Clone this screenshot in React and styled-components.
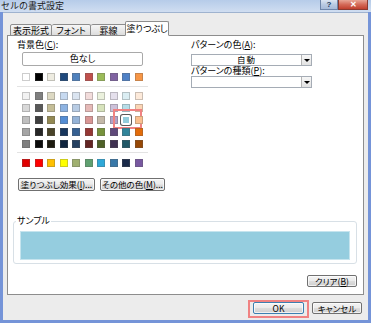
import React from "react";
import styled, { createGlobalStyle } from "styled-components";

const GlobalStyle = createGlobalStyle`
  html, body { margin: 0; padding: 0; background: #ffffff; }
  body {
    font-family: "Noto Sans CJK JP", "Liberation Sans", sans-serif;
    font-size: 9px;
    font-feature-settings: "palt";
    color: #000;
  }
`;

const Window = styled.div`
  width: 371px;
  height: 323px;
  display: flex;
  flex-direction: column;
  background: #7594d8; // frame blue
  overflow: hidden;
`;

const TitleBar = styled.div`
  height: 12px;
  display: flex;
  align-items: flex-start;
  padding-right: 3px;
  background: linear-gradient(180deg, #b6cce9 0%, #d0def1 100%);
`;

const Title = styled.div`
  line-height: 11px;
  padding-left: 1px;
  color: #1b1b1b;
  font-feature-settings: normal;
`;

const CapButton = styled.div`
  width: ${(p) => p.w}px;
  height: 10px;
  box-sizing: border-box;
  display: flex;
  align-items: center;
  justify-content: center;
  border: 1px solid ${(p) => (p.red ? "#8a3a30" : "#6f86aa")};
  border-top: none;
  background: ${(p) =>
    p.red
      ? "linear-gradient(180deg, #e8a696 0%, #d46a58 50%, #c0402e 100%)"
      : "linear-gradient(180deg, #dbe5f2 0%, #b9cae2 50%, #a6bad8 100%)"};
  color: ${(p) => (p.red ? "#ffffff" : "#243a5c")};
  font-family: "Liberation Sans", sans-serif;
  font-weight: bold;
  font-size: 8px;
  line-height: 1;
`;

const CapGroup = styled.div`
  margin-left: auto;
  display: flex;
`;

const Client = styled.div`
  flex: 1;
  margin: 0 3px 3px 3px;
  border-top: 1px solid #9fb3cf;
  background: #ececec;
  display: flex;
  flex-direction: column;
  padding: 8px 4px 0 4px;
`;

const TabStrip = styled.div`
  display: flex;
  align-items: flex-end;
  height: 15px;
  margin-left: 3px;
  margin-bottom: -1px;
  position: relative;
  z-index: 1;
`;

const Tab = styled.div`
  width: ${(p) => p.w}px;
  height: ${(p) => (p.active ? 15 : 12)}px;
  box-sizing: border-box;
  margin: ${(p) => (p.active ? "0 -2px" : "0")};
  border: 1px solid #8d8d8d;
  border-bottom: ${(p) => (p.active ? "1px solid #ffffff" : "1px solid #8d8d8d")};
  border-left: ${(p) => (p.first || p.active ? "1px solid #8d8d8d" : "none")};
  border-radius: 2px 2px 0 0;
  background: ${(p) =>
    p.active ? "#ffffff" : "linear-gradient(180deg, #f6f6f6 0%, #eaeaea 50%, #dcdcdc 100%)"};
  display: flex;
  align-items: center;
  justify-content: center;
  line-height: 10px;
  white-space: nowrap;
  padding-top: ${(p) => (p.active ? 0 : 1)}px;
`;

const Panel = styled.div`
  height: 260px;
  box-sizing: border-box;
  border: 1px solid #8d8d8d;
  background: #ffffff;
  display: flex;
  flex-direction: column;
  padding-top: 4px;
`;

const Top = styled.div`
  display: flex;
`;

const LeftCol = styled.div`
  width: 175px;
  padding-left: 9px;
  box-sizing: border-box;
  display: flex;
  flex-direction: column;
`;

const RightCol = styled.div`
  display: flex;
  flex-direction: column;
  margin-left: 8px;
`;

const Label = styled.div`
  line-height: 10px;
  height: 10px;
  white-space: nowrap;
`;

const NoColor = styled.div`
  margin: 2px 0 0 5px;
  width: 121px;
  height: 14px;
  box-sizing: border-box;
  border: 1px solid #a9a9a9;
  border-radius: 2px;
  background: #ffffff;
  display: flex;
  align-items: center;
  justify-content: center;
  line-height: 10px;
`;

const SwatchGrid = styled.div`
  margin: ${(p) => p.mt}px 0 0 5px;
  display: grid;
  grid-template-columns: repeat(10, 8px);
  column-gap: 4.55px;
  row-gap: 4px;
`;

const Swatch = styled.div`
  width: 8px;
  height: 8px;
  box-sizing: border-box;
  border: 1px solid rgba(90, 90, 90, 0.3);
  background: ${(p) => p.c};
  position: relative;
  ${(p) =>
    p.selected &&
    `
    border: 1px solid #ffffff;
    box-shadow: 0 0 0 1px #ffffff, 0 0 0 2px #5a5a5a;
    border-radius: 1px;
  `}
`;

const Marker = styled.div`
  position: absolute;
  left: -10px;
  top: -8px;
  width: 29px;
  height: 20px;
  box-sizing: border-box;
  border: 2px solid #f08282;
`;

const Separator = styled.div`
  margin: ${(p) => p.mt}px 0 0 0;
  width: 131px;
  height: 1px;
  background: #e3e3e3;
`;

const ButtonRow = styled.div`
  display: flex;
  gap: 5px;
  margin: 11px 0 0 1px;
`;

const Button = styled.div`
  width: ${(p) => p.w}px;
  height: ${(p) => p.h || 13}px;
  box-sizing: border-box;
  border: 1px solid ${(p) => (p.primary ? "#3c7fb1" : "#707070")};
  border-radius: 2px;
  background: linear-gradient(180deg, #f3f3f3 0%, #ebebeb 48%, #dddddd 52%, #cfcfcf 100%);
  box-shadow: inset 0 0 0 1px rgba(255, 255, 255, 0.7);
  display: flex;
  align-items: center;
  justify-content: center;
  line-height: 9px;
  white-space: nowrap;
  font-size: 8.5px;
`;

const Select = styled.div`
  margin-top: ${(p) => p.mt}px;
  width: 121px;
  height: 12px;
  box-sizing: border-box;
  border: 1px solid #a5acb5;
  background: #ffffff;
  display: flex;
`;

const SelectText = styled.div`
  flex: 1;
  display: flex;
  align-items: center;
  justify-content: center;
  font-size: 8.5px;
  line-height: 9px;
  height: 9px;
  letter-spacing: 1px;
`;

const SelectArrow = styled.div`
  width: 10px;
  box-sizing: border-box;
  border-left: 1px solid #b4b4b4;
  background: linear-gradient(180deg, #f7f7f7 0%, #e2e2e2 100%);
  display: flex;
  align-items: center;
  justify-content: center;

  &::after {
    content: "";
    border-left: 3px solid transparent;
    border-right: 3px solid transparent;
    border-top: 3px solid #000000;
  }
`;

const SampleBox = styled.div`
  position: relative;
  margin: 30px 6px 0 5px;
  height: 43px;
  box-sizing: border-box;
  border: 1px solid #d8e0e6;
  border-radius: 3px;
  padding: 9px 6px 0 6px;
`;

const SampleLabel = styled.div`
  position: absolute;
  left: 2px;
  top: -6px;
  padding: 0 1px;
  background: #ffffff;
  line-height: 10px;
`;

const SampleFill = styled.div`
  height: 29px;
  box-sizing: border-box;
  border: 1px solid #c6e4ee;
  background: #95cddf;
`;

const ClearRow = styled.div`
  display: flex;
  justify-content: flex-end;
  margin: 11px 6px 0 0;
`;

const Footer = styled.div`
  display: flex;
  justify-content: flex-end;
  gap: 8px;
  padding: 7px 2px 0 0;
`;

const Annotated = styled.div`
  position: relative;
`;

const OkMarker = styled.div`
  position: absolute;
  left: -5px;
  top: -2px;
  width: 61px;
  height: 18px;
  box-sizing: border-box;
  border: 2px solid #f08282;
`;

const themeRow = ["#ffffff", "#000000", "#eeece1", "#1f497d", "#4f81bd", "#c0504d", "#9bbb59", "#8064a2", "#4f81c6", "#f79646"];

const tints = [
  ["#f2f2f2", "#7f7f7f", "#ddd9c3", "#c6d9f0", "#dbe5f1", "#f2dcdb", "#ebf1dd", "#e5e0ec", "#dbeef3", "#fdeada"],
  ["#d8d8d8", "#595959", "#c4bd97", "#8db3e2", "#b8cce4", "#e5b9b7", "#d7e3bc", "#ccc1d9", "#b7dde8", "#fbd5b5"],
  ["#bfbfbf", "#3f3f3f", "#938953", "#548dd4", "#95b3d7", "#d99694", "#c3b8a8", "#b2a2c7", "#92cddc", "#fac08f"],
  ["#a5a5a5", "#262626", "#494429", "#17365d", "#366092", "#953734", "#76923c", "#5f497a", "#31859b", "#e36c09"],
  ["#7f7f7f", "#0c0c0c", "#1d1b10", "#0f243e", "#244061", "#632423", "#4f6128", "#3f3151", "#205867", "#974806"],
];

const standard = ["#e00000", "#ff0000", "#ffc000", "#ffff00", "#a0b070", "#5fa070", "#2fa8d8", "#3878a8", "#1a2a4a", "#7858a0"];

const App = () => {
  return (
    <>
      <GlobalStyle />
      <Window>
        <TitleBar>
          <Title>セルの書式設定</Title>
          <CapGroup>
            <CapButton w={18}>?</CapButton>
            <CapButton w={30} red>
              ✕
            </CapButton>
          </CapGroup>
        </TitleBar>
        <Client>
          <TabStrip>
            <Tab w={42} first>表示形式</Tab>
            <Tab w={39}>フォント</Tab>
            <Tab w={36}>罫線</Tab>
            <Tab w={44} active>塗りつぶし</Tab>
          </TabStrip>
          <Panel>
            <Top>
              <LeftCol>
                <Label>背景色(<u>C</u>):</Label>
                <NoColor>色なし</NoColor>
                <SwatchGrid mt={7}>
                  {themeRow.map((c, i) => (
                    <Swatch key={i} c={c} />
                  ))}
                </SwatchGrid>
                <Separator mt={5} />
                <SwatchGrid mt={5}>
                  {tints.map((row, r) =>
                    row.map((c, i) =>
                      r === 2 && i === 8 ? (
                        <Swatch key={`${r}-${i}`} c={c} selected>
                          <Marker />
                        </Swatch>
                      ) : (
                        <Swatch key={`${r}-${i}`} c={c} />
                      )
                    )
                  )}
                </SwatchGrid>
                <Separator mt={4} />
                <SwatchGrid mt={6}>
                  {standard.map((c, i) => (
                    <Swatch key={i} c={c} />
                  ))}
                </SwatchGrid>
                <ButtonRow>
                  <Button w={77}>塗りつぶし効果(<u>I</u>)...</Button>
                  <Button w={65}>その他の色(<u>M</u>)...</Button>
                </ButtonRow>
              </LeftCol>
              <RightCol>
                <Label>パターンの色(<u>A</u>):</Label>
                <Select mt={4}>
                  <SelectText>自動</SelectText>
                  <SelectArrow />
                </Select>
                <Label>パターンの種類(<u>P</u>):</Label>
                <Select mt={0}>
                  <SelectText />
                  <SelectArrow />
                </Select>
              </RightCol>
            </Top>
            <SampleBox>
              <SampleLabel>サンプル</SampleLabel>
              <SampleFill />
            </SampleBox>
            <ClearRow>
              <Button w={50} h={12}>クリア(<u>B</u>)</Button>
            </ClearRow>
          </Panel>
          <Footer>
            <Annotated>
              <Button w={51} h={12} primary>OK</Button>
              <OkMarker />
            </Annotated>
            <Button w={50} h={12}>キャンセル</Button>
          </Footer>
        </Client>
      </Window>
    </>
  );
};

export default App;
